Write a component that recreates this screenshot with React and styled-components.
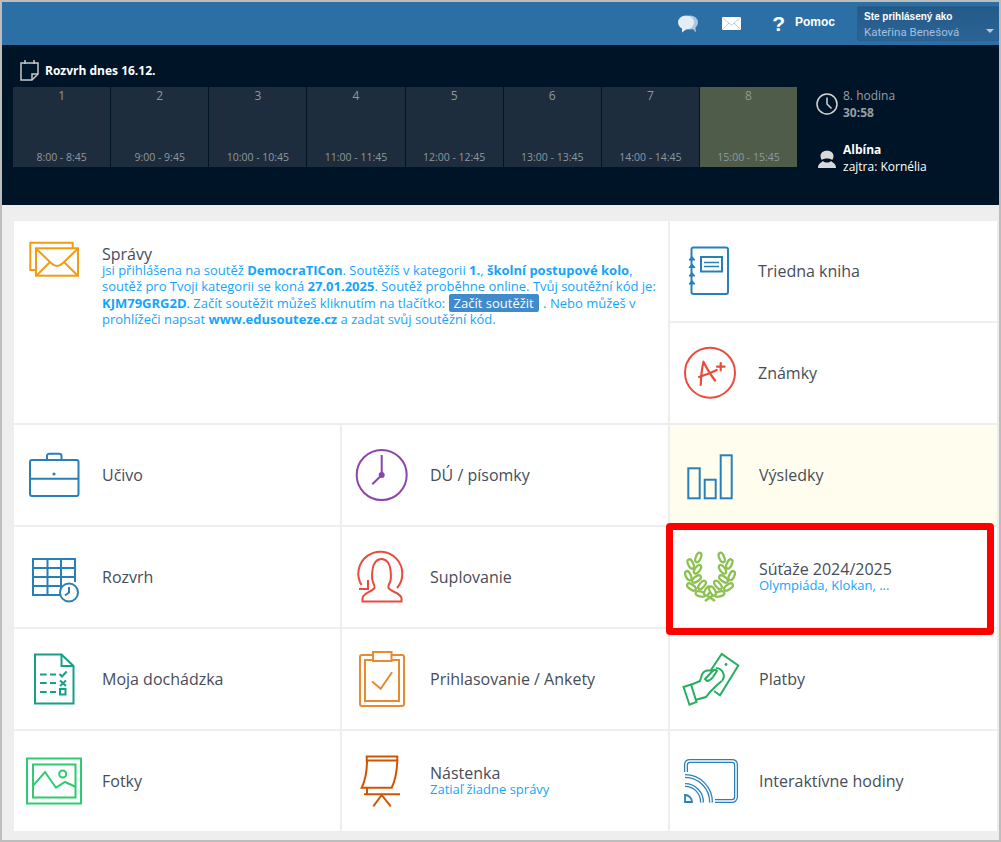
import React from 'react';
import styled, { createGlobalStyle } from 'styled-components';

const Global = createGlobalStyle`
  html, body { margin: 0; padding: 0; background: #eee; }
  body { font-family: "Open Sans", "Liberation Sans", sans-serif; }
`;

const Frame = styled.div`
  box-sizing: border-box;
  width: 1001px;
  height: 842px;
  border: 2px solid #bdbdbd;
  background: #eee;
  overflow: hidden;
`;

const TopBar = styled.header`
  height: 43px;
  background: #2c6fa4;
  display: flex;
  align-items: center;
  justify-content: flex-end;
`;

const TopIcon = styled.svg`
  display: block;
  flex: none;
  margin-right: ${p => p.$gap}px;
`;

const HelpMark = styled.span`
  font: bold 21px/1 "Liberation Sans", sans-serif;
  color: #fff;
  margin-right: 10px;
`;

const HelpLabel = styled.span`
  font: bold 12px/1 "Liberation Sans", sans-serif;
  color: #fff;
  margin-right: 22px;
  margin-top: -3px;
`;

const LoginBox = styled.div`
  position: relative;
  box-sizing: border-box;
  width: 142px;
  height: 35px;
  align-self: flex-start;
  margin-top: 4px;
  padding: 3px 0 0 6px;
  background: linear-gradient(#245a88, #2a6496);
  border: 1px solid #27608f;
  border-radius: 2px 0 0 2px;
`;

const LoginCaption = styled.div`
  font: bold 10px/14px "Liberation Sans", sans-serif;
  color: #fff;
`;

const LoginName = styled.div`
  font: 11.5px/15px "Roboto", "Liberation Sans", sans-serif;
  color: #a3c0e0;
  margin-top: 1px;
`;

const Caret = styled.span`
  position: absolute;
  right: 4px;
  bottom: 7px;
  border-left: 4px solid transparent;
  border-right: 4px solid transparent;
  border-top: 4px solid #b9c9d9;
`;

const DarkPanel = styled.section`
  height: 160px;
  background: #001427;
  display: flex;
  color: #fff;
`;

const ScheduleColumn = styled.div`
  padding: 13px 0 0 11px;
  width: 784px;
`;

const ScheduleTitle = styled.div`
  display: flex;
  align-items: center;
  height: 24px;
  margin-bottom: 5px;
  padding-left: 7px;
  font-size: 12px;
  font-weight: 700;
  gap: 6px;
`;

const Lessons = styled.div`
  display: grid;
  grid-template-columns: repeat(8, 97.15px);
  gap: 1px;
`;

const Lesson = styled.div`
  height: 80px;
  background: ${p => (p.$active ? '#505c4a' : '#1d2d3d')};
  color: #8f989f;
  display: flex;
  flex-direction: column;
  align-items: center;
  justify-content: space-between;
  padding: 0 0 2px;
  box-sizing: border-box;
`;

const LessonNo = styled.span`
  font-size: 12px;
  line-height: 17px;
`;

const LessonTime = styled.span`
  font-size: 10.5px;
  line-height: 15px;
`;

const SideInfo = styled.div`
  padding: 42px 0 0 19px;
  display: flex;
  flex-direction: column;
  gap: 20px;
`;

const InfoRow = styled.div`
  display: flex;
  align-items: center;
  gap: 5px;
`;

const InfoText = styled.div`
  font-size: 12px;
  line-height: 17px;
  color: ${p => (p.$muted ? '#959fa6' : '#fff')};
`;

const Main = styled.main`
  padding: 16px 0 0 12px;
  display: grid;
  grid-template-columns: 326px 326px 327px;
  grid-auto-rows: 100px;
  gap: 2px;
`;

const Tile = styled.div`
  position: relative;
  grid-column: ${p => (p.$wide ? 'span 2' : 'auto')};
  grid-row: ${p => (p.$wide ? 'span 2' : 'auto')};
  background: ${p => (p.$tint ? '#fffeee' : '#fff')};
  display: flex;
  align-items: ${p => (p.$wide ? 'flex-start' : 'center')};
  padding-top: ${p => (p.$wide ? '14px' : '0')};
  padding-left: 8px;
  box-sizing: border-box;
  min-width: 0;
`;

const Glyph = styled.svg`
  display: block;
  flex: none;
  width: 72px;
  height: 72px;
  margin-right: ${p => p.$gap ?? 8}px;
  fill: none;
  stroke: ${p => p.$color};
  stroke-width: 2;
`;

const LabelBlock = styled.div`
  display: flex;
  flex-direction: column;
  padding-top: ${p => (p.$wide ? '10px' : '0')};
  padding-bottom: ${p => (p.$sub ? '2px' : '0')};
  min-width: 0;
`;

const Label = styled.div`
  font-size: 16px;
  line-height: 18px;
  color: #464d59;
`;

const SubLabel = styled.div`
  font-size: 13px;
  line-height: 14px;
  color: #14a5fb;
`;

const Message = styled.div`
  width: 560px;
  font-size: 13px;
  line-height: 15.5px;
  color: #14a5fb;
  b { font-weight: 700; }
`;

const MessageButton = styled.span`
  display: inline-block;
  background: #428bca;
  color: #fff;
  font-size: 13px;
  line-height: 18px;
  padding: 0 5px;
  margin: 0 1px 0 0;
  border-radius: 2px;
  vertical-align: baseline;
`;

const Highlight = styled.div`
  position: absolute;
  z-index: 2;
  left: -4px;
  top: -4px;
  width: 328px;
  height: 112px;
  box-sizing: border-box;
  border: 7px solid #ff0000;
  border-radius: 4px;
  pointer-events: none;
`;

const Letter = styled.g`
  stroke-linecap: round;
  stroke-linejoin: round;
`;

const Icons = {
  mail: (c, gap) => (
    <Glyph viewBox="0 0 72 72" $color={c} $gap={gap}>
      <path d="M14 35H8.3V7.7H50.7V13" />
      <rect x="14" y="13.3" width="42" height="27.4" />
      <path d="M14.5 14L29 28C33 32 37 32 41 28L55.5 14M14.5 40.5L28 27M55.5 40.5L42 27" />
    </Glyph>
  ),
  book: (c, gap) => (
    <Glyph viewBox="0 0 72 72" $color={c} $gap={gap}>
      <path d="M13.5 16V14.5C13.5 13.5 14.5 12.5 15.5 12.5H48C49 12.5 50 13.5 50 14.5V57C50 58 49 59 48 59H15.5C14.5 59 13.5 58 13.5 57V50" />
      <path d="M13.5 16V50" />
      <path d="M11 25H17L14 21.5ZM11 32.5H17L14 29ZM11 41H17L14 37.5ZM11 49H17L14 45.5Z" fill={c} strokeWidth="1" />
      <rect x="23" y="22" width="21" height="14.5" />
      <path d="M26 27.5H41M26 31.5H41" strokeWidth="1.5" />
    </Glyph>
  ),
  grade: (c, gap) => (
    <Glyph viewBox="0 0 72 72" $color={c} $gap={gap}>
      <circle cx="32" cy="35.7" r="25" />
      <Letter strokeWidth="2.2">
        <path d="M22.7 48C23 40 24 31 25.5 24.7C28 30 33 38 37 43.5" />
        <path d="M21 40C27 38 33 36 38.7 33" />
        <path d="M42.7 26V33.5M39 29.7H46.5" />
      </Letter>
    </Glyph>
  ),
  briefcase: (c, gap) => (
    <Glyph viewBox="0 0 72 72" $color={c} $gap={gap}>
      <rect x="8" y="21" width="48.5" height="36" rx="2" />
      <path d="M25 20.5V17C25 15.5 26 14.7 27.5 14.7H37C38.5 14.7 39.5 15.5 39.5 17V20.5M8 39.7H56.5" />
      <circle cx="32" cy="35" r="1.6" fill={c} stroke="none" />
    </Glyph>
  ),
  timetable: (c, gap) => (
    <Glyph viewBox="0 0 72 72" $color={c} $gap={gap}>
      <path d="M43 54H11V18H53V41M11 27H53M11 36H53M11 45H40M25.5 18V54M39 18V54" />
      <circle cx="47" cy="51.5" r="9" fill="#fff" />
      <path d="M47 46V51.5L43 54.5" />
    </Glyph>
  ),
  clock: (c, gap) => (
    <Glyph viewBox="0 0 72 72" $color={c} $gap={gap}>
      <circle cx="31.7" cy="36" r="25" />
      <path d="M31.7 16V36L22.3 45.3" />
      <circle cx="31.7" cy="36" r="3" fill={c} stroke="none" />
    </Glyph>
  ),
  substitute: (c, gap) => (
    <Glyph viewBox="0 0 72 72" $color={c} $gap={gap}>
      <path d="M11.5 44A22 22 0 1 1 47 47" />
      <path d="M9 48H18V39" />
      <path d="M12.5 60.5H51.5V57.5C51.5 52 41 51 38.5 47C38 45 39 43 40 41C41.5 38 41 33 40.5 29C40 22 36 18 31.5 18C27 18 23 22 22.5 29C22 33 21.5 38 23 41C24 43 25 45 24.5 47C22 51 12.5 52 12.5 57.5Z" fill="#fff" />
    </Glyph>
  ),
  bars: (c, gap) => (
    <Glyph viewBox="0 0 72 72" $color={c} $gap={gap}>
      <rect x="10.3" y="29.3" width="11.4" height="30" />
      <rect x="26.7" y="40.7" width="11" height="18.6" />
      <rect x="42.7" y="16.3" width="11" height="43" />
    </Glyph>
  ),
  laurel: (c, gap) => {
    const leaves = [
      [20.3, 16.5, 22], [12.7, 23, -25], [19.5, 28.3, 35], [10.3, 34.7, -25],
      [18.5, 38, 55], [13.5, 46, -55], [24, 44, 40], [22.5, 53, -75], [29.5, 50, 30],
    ];
    return (
      <Glyph viewBox="0 0 72 72" $color={c} $gap={gap}>
        <path d="M27 60L37 53M37 60L27 53" strokeWidth="2.4" />
        {leaves.map(([x, y, r], i) => (
          <g key={i} strokeWidth="2.3">
            <ellipse cx={x} cy={y} rx="2.5" ry="5" transform={`rotate(${r} ${x} ${y})`} fill="#fff" />
            <ellipse cx={64 - x} cy={y} rx="2.5" ry="5" transform={`rotate(${-r} ${64 - x} ${y})`} fill="#fff" />
          </g>
        ))}
      </Glyph>
    );
  },
  attendance: (c, gap) => (
    <Glyph viewBox="0 0 72 72" $color={c} $gap={gap}>
      <path d="M13 11.5H39.5L51.5 23V60.5H13Z" />
      <path d="M39.5 11.5V23H51.5" />
      <path d="M18 31.5H24.7M28 31.5H34M18 40H24.7M28 40H34M18 49H24.7M28 49H34" />
      <path d="M37.5 31L40 33.5L44.7 28.5M38 37.5L44 43M44 37.5L38 43" />
      <rect x="38" y="46" width="5.5" height="5.5" />
    </Glyph>
  ),
  survey: (c, gap) => (
    <Glyph viewBox="0 0 72 72" $color={c} $gap={gap}>
      <rect x="10" y="12" width="44" height="51" rx="2" />
      <rect x="15" y="17" width="34" height="41" fill="#fff" />
      <rect x="23" y="9" width="18.5" height="9" fill="#fff" />
      <path d="M22.7 39L30.7 45.7L41.7 29.7" strokeLinecap="round" />
    </Glyph>
  ),
  money: (c, gap) => (
    <Glyph viewBox="0 0 72 72" $color={c} $gap={gap}>
      <path d="M33 27L43.7 11L60.3 22.5L42 52.3L36 48" />
      <circle cx="48" cy="21.5" r="1.4" fill={c} stroke="none" />
      <path d="M38 25A8 8 0 0 1 44 38" />
      <path d="M5.5 44L13 41.5L18.5 59L11.5 61.7Z" />
      <path d="M12.7 42L22 38L24 31.5Q26 27.5 30 27.5H36" />
      <path d="M27 36L35 27.5Q37 26 39 28L35 34Q32 38 29 38Z" />
      <path d="M17 57L28 54L32 49L38 43L43.7 38" />
    </Glyph>
  ),
  photo: (c, gap) => (
    <Glyph viewBox="0 0 72 72" $color={c} $gap={gap}>
      <rect x="5" y="13.5" width="54" height="45" />
      <rect x="11" y="19.5" width="42.5" height="33" />
      <path d="M11.3 40.3L23 27L34 42.7L43 37L54 42" />
      <circle cx="40.7" cy="29" r="3.5" />
    </Glyph>
  ),
  board: (c, gap) => (
    <Glyph viewBox="0 0 72 72" $color={c} $gap={gap}>
      <path d="M16.7 11.5H47.3V15.5H16.7Z" />
      <path d="M17 15.5C17 26 15 36 11.7 42.7H41.7C45 36 47 26 47.3 15.5" />
      <path d="M14 49.3H50M17 43V49M31.7 50L23.3 61.3M31.7 50L40.7 61.3" />
    </Glyph>
  ),
  cast: (c, gap) => (
    <Glyph viewBox="0 0 72 72" $color={c} $gap={gap}>
      <g strokeWidth="4">
        <path d="M8 27V20C8 17 10 16 12 16H54C56 16 58 17 58 20V52C58 54.5 56 56 54 56H37" />
        <path d="M7 31A26 26 0 0 1 33 57.5M7 40A17 17 0 0 1 24 57.5" />
      </g>
      <g stroke="#fff" strokeWidth="1.5">
        <path d="M8 27V20C8 17 10 16 12 16H54C56 16 58 17 58 20V52C58 54.5 56 56 54 56H37" />
        <path d="M7 31A26 26 0 0 1 33 57.5M7 40A17 17 0 0 1 24 57.5" />
      </g>
      <path d="M7 50A7 7 0 0 1 14 57H7Z" strokeWidth="1.8" />
    </Glyph>
  ),
};

const lessons = [
  ['1', '8:00 - 8:45'], ['2', '9:00 - 9:45'], ['3', '10:00 - 10:45'], ['4', '11:00 - 11:45'],
  ['5', '12:00 - 12:45'], ['6', '13:00 - 13:45'], ['7', '14:00 - 14:45'], ['8', '15:00 - 15:45'],
];

const MenuTile = ({ icon, color, label, sub, tint, gap, children }) => (
  <Tile $tint={tint}>
    {Icons[icon](color, gap)}
    <LabelBlock $sub={!!sub}>
      <Label>{label}</Label>
      {sub && <SubLabel>{sub}</SubLabel>}
    </LabelBlock>
    {children}
  </Tile>
);

export default function App() {
  return (
    <Frame>
      <Global />
      <TopBar>
        <TopIcon width="20" height="18" viewBox="0 0 20 18" $gap={24}>
          <ellipse cx="12" cy="7.5" rx="8" ry="7" fill="#a9c7e0" />
          <path d="M13 12L18 17.5L17 10Z" fill="#a9c7e0" />
          <ellipse cx="8" cy="7.5" rx="8" ry="7" fill="#e3edf5" />
          <path d="M4 12L4 17.5L10 13Z" fill="#e3edf5" />
        </TopIcon>
        <TopIcon width="19" height="13" viewBox="0 0 19 13" $gap={31}>
          <rect width="19" height="13" fill="#fff" />
          <path d="M0 0L8 7C9 8 10 8 11 7L19 0M0 13L7 6M19 13L12 6" fill="none" stroke="#b9cfe0" strokeWidth="1" />
        </TopIcon>
        <HelpMark>?</HelpMark>
        <HelpLabel>Pomoc</HelpLabel>
        <LoginBox>
          <LoginCaption>Ste prihlásený ako</LoginCaption>
          <LoginName>Kateřina Benešová</LoginName>
          <Caret />
        </LoginBox>
      </TopBar>

      <DarkPanel>
        <ScheduleColumn>
          <ScheduleTitle>
            <svg width="19" height="22" viewBox="0 0 19 22" fill="none" stroke="#c8c8c8" strokeWidth="1.5">
              <path d="M1 4H18V15L12 21H1Z" />
              <path d="M12 21V15H18M5 1V5M14 1V5" />
            </svg>
            Rozvrh dnes 16.12.
          </ScheduleTitle>
          <Lessons>
            {lessons.map(([n, t]) => (
              <Lesson key={n} $active={n === '8'}>
                <LessonNo>{n}</LessonNo>
                <LessonTime>{t}</LessonTime>
              </Lesson>
            ))}
          </Lessons>
        </ScheduleColumn>
        <SideInfo>
          <InfoRow>
            <svg width="22" height="22" viewBox="0 0 22 22" fill="none" stroke="#d5d5d5" strokeWidth="1.5">
              <circle cx="11" cy="11" r="10" />
              <path d="M11 4.5V11L15.5 15.5" />
            </svg>
            <InfoText $muted>
              8. hodina<br /><b>30:58</b>
            </InfoText>
          </InfoRow>
          <InfoRow>
            <svg width="22" height="22" viewBox="0 0 22 22">
              <path d="M4.5 9C4.5 2 17.5 2 17.5 9C17.5 10.5 17 12 16 13C15 11 7 11 6 13C5 12 4.5 10.5 4.5 9Z" fill="#d9d9d9" />
              <path d="M7 14C9 16 13 16 15 14C17.5 16 20 17 20 21H2C2 17 4.5 16 7 14Z" fill="#d9d9d9" />
            </svg>
            <InfoText>
              <b>Albína</b><br />zajtra: Kornélia
            </InfoText>
          </InfoRow>
        </SideInfo>
      </DarkPanel>

      <Main>
        <Tile $wide>
          {Icons.mail('#f39c12')}
          <LabelBlock $wide>
            <Label>Správy</Label>
            <Message>
              jsi přihlášena na soutěž <b>DemocraTICon</b>. Soutěžíš v kategorii <b>1.</b>, <b>školní postupové kolo</b>,
              soutěž pro Tvoji kategorii se koná <b>27.01.2025</b>. Soutěž proběhne online. Tvůj soutěžní kód je:{' '}
              <b>KJM79GRG2D</b>. Začít soutěžit můžeš kliknutím na tlačítko:{' '}
              <MessageButton>Začít soutěžit</MessageButton> . Nebo můžeš v prohlížeči napsat{' '}
              <b>www.edusouteze.cz</b> a zadat svůj soutěžní kód.
            </Message>
          </LabelBlock>
        </Tile>
        <MenuTile icon="book" color="#2980b9" label="Triedna kniha" />
        <MenuTile icon="grade" color="#e74c3c" label="Známky" />
        <MenuTile icon="briefcase" color="#2980b9" label="Učivo" />
        <MenuTile icon="clock" color="#8e44ad" label="DÚ / písomky" />
        <MenuTile icon="bars" color="#2980b9" label="Výsledky" tint gap={9} />
        <MenuTile icon="timetable" color="#2980b9" label="Rozvrh" />
        <MenuTile icon="substitute" color="#e74c3c" label="Suplovanie" />
        <MenuTile icon="laurel" color="#8cc152" label="Súťaže 2024/2025" sub="Olympiáda, Klokan, ..." gap={9}>
          <Highlight />
        </MenuTile>
        <MenuTile icon="attendance" color="#16a085" label="Moja dochádzka" />
        <MenuTile icon="survey" color="#e98a2f" label="Prihlasovanie / Ankety" />
        <MenuTile icon="money" color="#27ae60" label="Platby" gap={9} />
        <MenuTile icon="photo" color="#2ecc71" label="Fotky" />
        <MenuTile icon="board" color="#d35400" label="Nástenka" sub="Zatiaľ žiadne správy" />
        <MenuTile icon="cast" color="#2980b9" label="Interaktívne hodiny" gap={9} />
      </Main>
    </Frame>
  );
}
